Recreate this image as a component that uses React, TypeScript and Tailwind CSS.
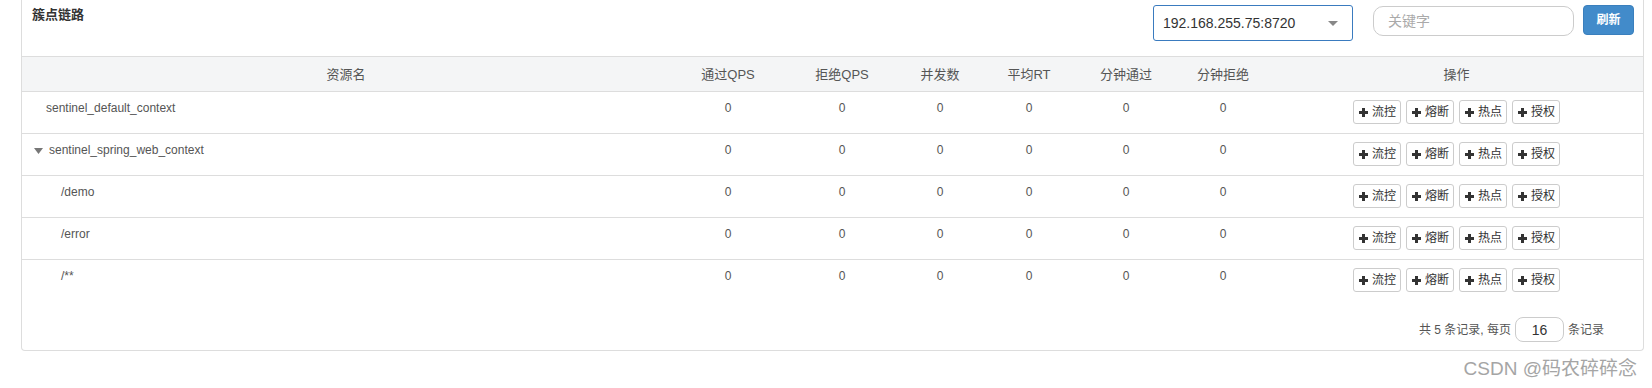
import React from "react";

interface ResourceRow {
  name: string;
  indent: "root" | "tree" | "child";
}

const rows: ResourceRow[] = [
  { name: "sentinel_default_context", indent: "root" },
  { name: "sentinel_spring_web_context", indent: "tree" },
  { name: "/demo", indent: "child" },
  { name: "/error", indent: "child" },
  { name: "/**", indent: "child" },
];

const columns = ["通过QPS", "拒绝QPS", "并发数", "平均RT", "分钟通过", "分钟拒绝"];
const actions = ["流控", "熔断", "热点", "授权"];

const gridCols = "grid grid-cols-[648px_116px_112px_84px_94px_100px_94px_1fr]";

const PlusIcon = () => (
  <svg width="9" height="9" viewBox="0 0 9 9" className="shrink-0">
    <rect x="3" y="0" width="3" height="9" fill="#333" />
    <rect x="0" y="3" width="9" height="3" fill="#333" />
  </svg>
);

const ActionButton = ({ label }: { label: string }) => (
  <button className="flex h-[24px] w-[48px] items-center gap-[4px] rounded-[3px] border border-[#ccc] bg-white pl-[5px] text-[12px] text-[#333]">
    <PlusIcon />
    <span>{label}</span>
  </button>
);

const NameCell = ({ row }: { row: ResourceRow }) => {
  if (row.indent === "tree") {
    return (
      <div className="flex items-center pl-[12px] pt-2 leading-[17px]">
        <svg width="9" height="6" viewBox="0 0 9 6" className="mr-[6px] mt-[1px]">
          <polygon points="0,0 9,0 4.5,6" fill="#777" />
        </svg>
        <span>{row.name}</span>
      </div>
    );
  }

  return (
    <div className={`pt-2 leading-[17px] ${row.indent === "child" ? "pl-[39px]" : "pl-[24px]"}`}>
      {row.name}
    </div>
  );
};

export default function App() {
  return (
    <div
      className="h-[388px] w-[1652px] overflow-hidden bg-white text-[#555]"
      style={{ fontFamily: '"Liberation Sans", Arial, "Noto Sans CJK SC", sans-serif' }}
    >
      <div className="ml-[21px] w-[1623px] rounded-b-[4px] border border-t-0 border-[#ddd]">
        {/* toolbar */}
        <div className="flex h-[56px] justify-between">
          <div className="pl-[10px] pt-[6px] text-[13px] font-bold leading-[18px] text-[#333]">
            簇点链路
          </div>
          <div className="flex items-start pr-[9px]">
            <div className="mt-[5px] flex h-[36px] w-[200px] items-center justify-between rounded-[3px] border border-[#3a7bbf] pl-[9px] pr-[14px] text-[14px] text-[#333]">
              <span>192.168.255.75:8720</span>
              <svg width="10" height="5" viewBox="0 0 10 5">
                <polygon points="0,0 10,0 5,5" fill="#888" />
              </svg>
            </div>
            <input
              className="ml-[20px] mt-[6px] h-[30px] w-[201px] rounded-[10px] border border-[#ccc] px-[14px] text-[14px] text-[#333] outline-none placeholder:text-[#aaa]"
              placeholder="关键字"
            />
            <button className="ml-[9px] mt-[5px] h-[30px] w-[51px] rounded-[4px] border border-[#3a7fbd] bg-[#428bca] text-[12px] font-bold text-white">
              刷新
            </button>
          </div>
        </div>

        {/* header */}
        <div className={`${gridCols} h-[36px] items-center border-y border-[#ddd] bg-[#f4f5f6] pt-[1px] text-center text-[13px]`}>
          <div>资源名</div>
          {columns.map((c) => (
            <div key={c}>{c}</div>
          ))}
          <div>操作</div>
        </div>

        {/* rows */}
        {rows.map((row, i) => (
          <div
            key={row.name}
            className={`${gridCols} items-start text-[12px] ${
              i < rows.length - 1 ? "h-[42px] border-b border-[#ddd]" : "h-[41px]"
            }`}
          >
            <NameCell row={row} />
            {columns.map((c) => (
              <div key={c} className="pt-2 text-center leading-[17px]">
                0
              </div>
            ))}
            <div className="flex justify-center gap-[5px] pt-2">
              {actions.map((a) => (
                <ActionButton key={a} label={a} />
              ))}
            </div>
          </div>
        ))}

        {/* pagination */}
        <div className="flex h-[49px] items-start justify-end pr-[39px] pt-[16px] text-[12px]">
          <div className="flex h-[25px] items-center">
            <span>共 5 条记录, 每页</span>
            <input
              className="mx-[4px] h-[25px] w-[49px] rounded-[8px] border border-[#ccc] text-center text-[14px] text-[#333] outline-none"
              defaultValue="16"
            />
            <span>条记录</span>
          </div>
        </div>
      </div>

      <div className="mt-[6px] flex justify-end pr-[15px] text-[19px] leading-[24px] text-[#a5a5a5]">
        CSDN @码农碎碎念
      </div>
    </div>
  );
}
